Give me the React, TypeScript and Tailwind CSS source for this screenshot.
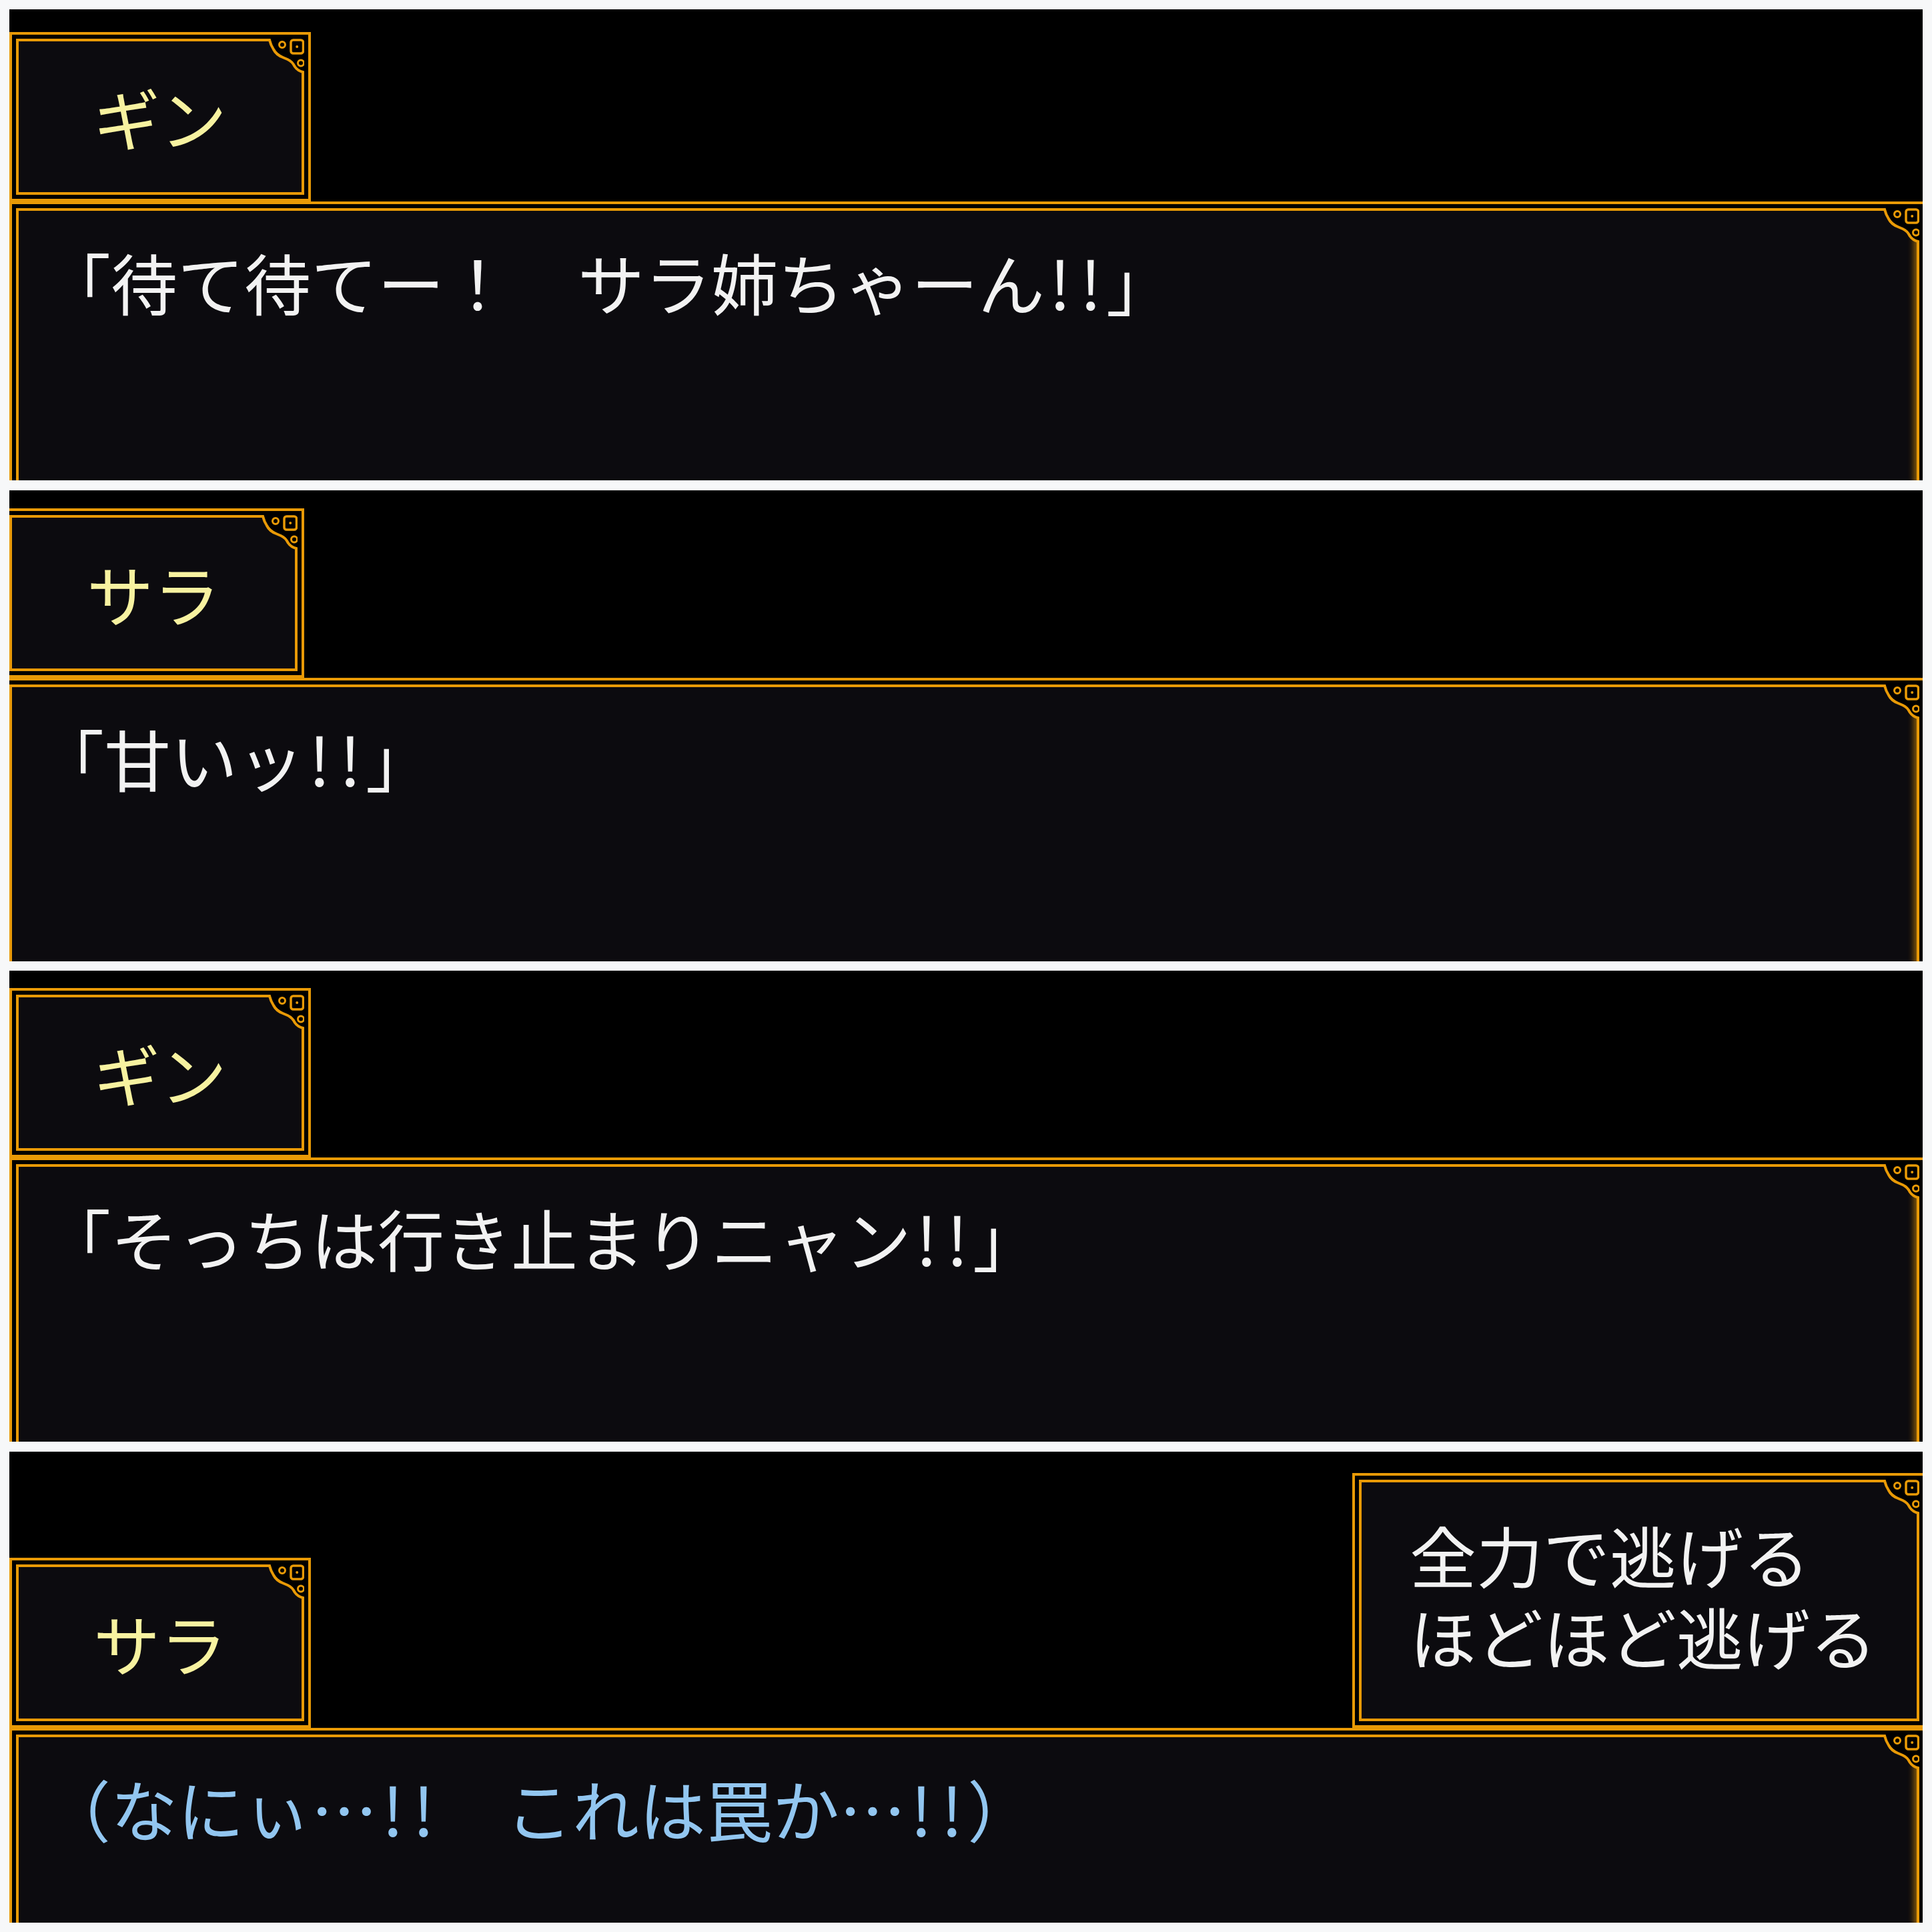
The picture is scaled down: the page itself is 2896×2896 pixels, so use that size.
import type { ReactNode } from 'react';
import { twMerge } from 'tailwind-merge';

const jp = "font-['Noto_Sans_CJK_JP','Noto_Sans_CJK_SC',sans-serif]";

// corner decoration on the inner frame (top-right)
function Ornament() {
  return (
    <svg className="absolute -right-[4px] -top-[4px] h-[56px] w-[56px]" viewBox="0 0 56 56" fill="none">
      <path
        d="M2 0 H56 V52 L54 50 Q46 48 42 42 Q38 34 31 31 L24 28 Q14 24 10 16 Q6 10 4 2 Z"
        fill="#000"
      />
      <path
        d="M0 2 H4 Q6 10 10 16 Q14 24 24 28 L31 31 Q38 34 42 42 Q46 48 54 50 V56"
        stroke="#e99a06"
        strokeWidth="4"
      />
      <circle cx="23" cy="9" r="4.5" stroke="#e99a06" strokeWidth="3" />
      <rect x="36" y="2" width="18.5" height="20" rx="3.5" stroke="#e99a06" strokeWidth="3.5" />
      <circle cx="45.2" cy="12" r="2" fill="#e99a06" />
      <circle cx="51" cy="36.5" r="4.5" stroke="#e99a06" strokeWidth="3" />
    </svg>
  );
}

function Frame({ className, glow, children }: { className?: string; glow?: boolean; children?: ReactNode }) {
  return (
    <div className={twMerge('shrink-0 border-4 border-[#e99a06] bg-black p-[6px]', className)}>
      <div
        className={twMerge(
          'relative h-full border-4 border-[#e99a06] bg-[#0c0b0f]',
          glow && 'shadow-[inset_-12px_0_10px_-8px_rgba(233,154,6,0.6)]'
        )}
      >
        <Ornament />
        {children}
      </div>
    </div>
  );
}

// half-width "!" like the game font
function Line({ text }: { text: string }) {
  return (
    <>
      {text.split('').map((c, i) =>
        c === '!' ? (
          <span key={i} className="inline-block w-[0.46em] text-center">
            !
          </span>
        ) : (
          c
        )
      )}
    </>
  );
}

function NameBox({ name, className }: { name: string; className?: string }) {
  return (
    <Frame className={twMerge('h-[254px] w-[452px]', className)}>
      <div className="flex h-full items-center justify-center text-[100px] leading-none text-[#f7f2a0]">
        {name}
      </div>
    </Frame>
  );
}

function MessageBox({ text, color, className }: { text: string; color: string; className?: string }) {
  return (
    <Frame glow className={twMerge('-mr-[5px] h-[480px]', className)}>
      <p className={twMerge('whitespace-pre pl-[38px] pt-[56px] text-[100px] leading-none', color)}>
        <Line text={text} />
      </p>
    </Frame>
  );
}

export default function App() {
  return (
    <div className={twMerge('flex min-h-screen flex-col gap-[14.67px] bg-[#f7f8f9] p-[14px]', jp)}>
      <section className="h-[706px] shrink-0 overflow-hidden bg-black pt-[34px]">
        <NameBox name="ギン" />
        <MessageBox text="「待て待てー！　サラ姉ちゃーん!!」" color="text-[#f2f2f2]" />
      </section>

      <section className="h-[706px] shrink-0 overflow-hidden bg-black pt-[27px]">
        <NameBox name="サラ" className="-ml-[10px]" />
        <MessageBox text="「甘いッ!!」" color="text-[#f2f2f2]" className="-ml-[10px]" />
      </section>

      <section className="h-[706px] shrink-0 overflow-hidden bg-black pt-[26px]">
        <NameBox name="ギン" />
        <MessageBox text="「そっちは行き止まりニャン!!」" color="text-[#f2f2f2]" />
      </section>

      <section className="h-[706px] shrink-0 overflow-hidden bg-black pt-[32px]">
        <div className="flex items-end justify-between">
          <NameBox name="サラ" className="h-[255px]" />
          <Frame className="-mr-[5px] h-[382px] w-[860px]">
            <div className="flex flex-col gap-[22px] pl-[72px] pt-[58px] text-[100px] leading-none text-[#f2f2f2]">
              <p>全力で逃げる</p>
              <p>ほどほど逃げる</p>
            </div>
          </Frame>
        </div>
        <MessageBox text="（なにぃ…!!　これは罠か…!!）" color="text-[#92c6f0]" />
      </section>
    </div>
  );
}
